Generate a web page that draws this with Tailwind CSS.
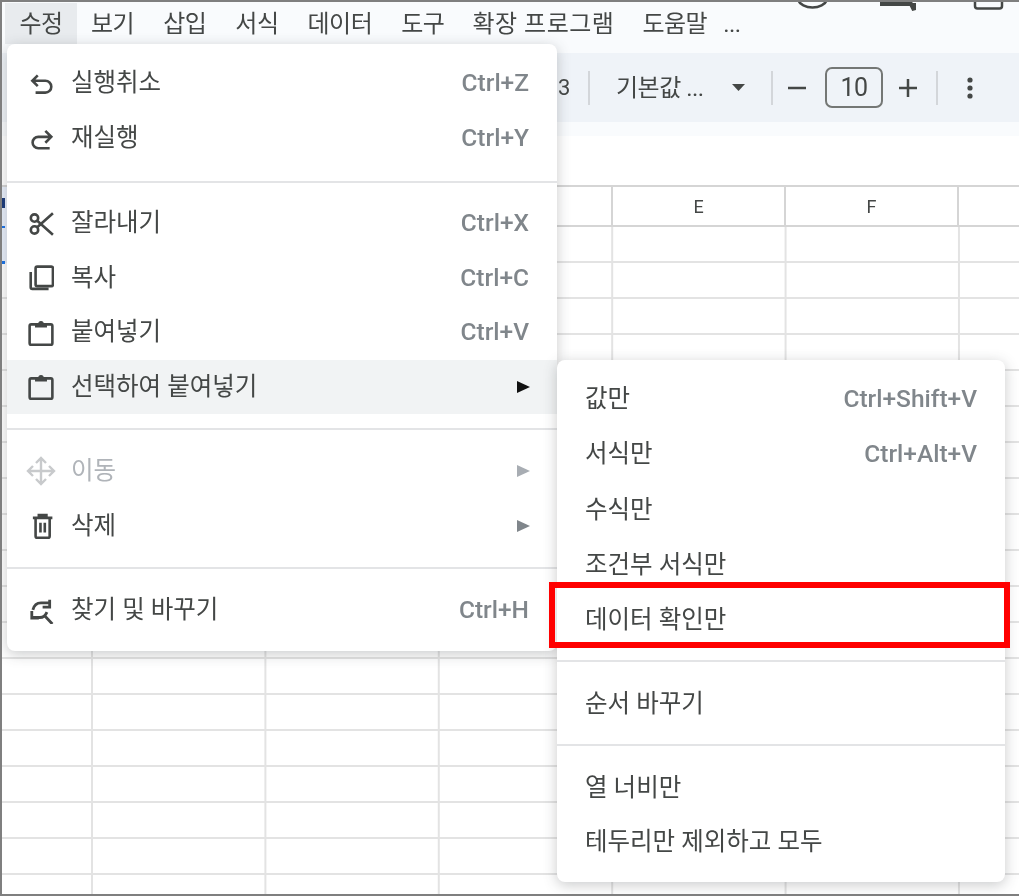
<!DOCTYPE html>
<html lang="ko">

<head>
    <meta charset="UTF-8">
    <title>Edit menu</title>
    <script src="https://cdn.jsdelivr.net/npm/@tailwindcss/browser@4"></script>
</head>

<body class="bg-white">
    <div class="relative w-[1019px] h-[896px] overflow-hidden bg-white font-['Roboto','Noto_Sans_CJK_KR',sans-serif] text-[#444746] blur-[0.45px]">

        <!-- menu bar -->
        <div class="h-[44px] bg-[#f9fbfd] flex items-center pl-[5px] pt-[3px] text-[24px] tracking-[-0.5px]">
            <div class="bg-[#e8ebee] h-[41px] w-[72px] flex items-center justify-center">수정</div>
            <span class="ml-[14px]">보기</span>
            <span class="ml-[29px]">삽입</span>
            <span class="ml-[29px]">서식</span>
            <span class="ml-[29px]">데이터</span>
            <span class="ml-[29px]">도구</span>
            <span class="ml-[28px] tracking-[0.5px]">확장 프로그램</span>
            <span class="ml-[28px]">도움말</span>
            <span class="ml-[16px]">...</span>
        </div>

        <!-- toolbar -->
        <div class="h-[92px] pt-[9px] bg-[#f9fbfd]">
            <div class="h-[69px] bg-[#eff3f8] flex items-center pl-[558px]">
                <span class="text-[22px] w-[12px]">3</span>
                <div class="ml-[18px] w-[2px] h-[34px] bg-[#d3d6da]"></div>
                <span class="ml-[26px] text-[24px] w-[116px] whitespace-nowrap tracking-[-0.5px]">기본값 ...</span>
                <svg class="w-[13px] h-[7px]" viewBox="0 0 13 7"><path d="M0 0h13L6.500 7z" fill="#444746"/></svg>
                <div class="ml-[26px] w-[2px] h-[34px] bg-[#d3d6da]"></div>
                <svg class="ml-[15px] w-[18px] h-[18px]" viewBox="0 0 18 18"><path d="M0 9h18" stroke="#444746" stroke-width="2.500"/></svg>
                <div class="ml-[19px] w-[58px] h-[41px] border-2 border-[#747775] rounded-[7px] flex items-center justify-center text-[25px] tracking-[-0.5px]">10</div>
                <svg class="ml-[16px] w-[18px] h-[18px]" viewBox="0 0 18 18"><path d="M0 9h18M9 0v18" stroke="#444746" stroke-width="2.500"/></svg>
                <div class="ml-[19px] w-[2px] h-[34px] bg-[#d3d6da]"></div>
                <svg class="ml-[29px] w-[6px] h-[22px]" viewBox="0 0 6 22"><circle cx="3" cy="3" r="2.600" fill="#444746"/><circle cx="3" cy="11" r="2.600" fill="#444746"/><circle cx="3" cy="19" r="2.600" fill="#444746"/></svg>
            </div>
        </div>

        <!-- formula bar -->
        <div class="h-[49px] bg-white"></div>

        <!-- sheet: header row + cells -->
        <div class="grid grid-cols-[93px_173px_173px_174px_173px_173px_60px] border-t-2 border-[#d5d5d5]">
            <div class="h-[40px] border-r-2 border-b-2 border-[#d5d5d5]"></div>
            <div class="h-[40px] border-r-2 border-b-2 border-[#d5d5d5]"></div>
            <div class="h-[40px] border-r-2 border-b-2 border-[#d5d5d5]"></div>
            <div class="h-[40px] border-r-2 border-b-2 border-[#d5d5d5]"></div>
            <div class="h-[40px] border-r-2 border-b-2 border-[#d5d5d5] flex items-center justify-center text-[18px]">E</div>
            <div class="h-[40px] border-r-2 border-b-2 border-[#d5d5d5] flex items-center justify-center text-[18px]">F</div>
            <div class="h-[40px] border-b-2 border-[#d5d5d5]"></div>
        </div>
        <!-- cell gridlines are a repeating background, there are too many rows to write out -->
        <div class="h-[700px] bg-[linear-gradient(to_right,#e3e3e3_2px,transparent_2px),linear-gradient(to_bottom,#e3e3e3_2px,transparent_2px)] bg-[size:173.4px_36px] bg-[position:91px_34px]"></div>

        <!-- toolbar icons cut off by the top of the crop -->
        <svg class="absolute left-[790px] top-0 w-[225px] h-[14px]" viewBox="0 0 225 14" fill="none" stroke="#444746" stroke-width="2.500">
            <path d="M8 0a15 10 0 0 0 29 0"/>
            <path d="M90 4h31l3 6V3" stroke-width="4"/>
            <path d="M185 0v6a2.500 2.500 0 0 0 2.500 2.500h22A2.500 2.500 0 0 0 212 6V0"/>
        </svg>

        <!-- selected cell column peeking out left of the menu -->
        <div class="absolute left-[2px] top-[187px] w-[5px] h-[76px] bg-[#e8effb]"></div>
        <div class="absolute left-[2px] top-[198px] w-[3px] h-[10px] bg-[#1a3a7a]"></div>
        <div class="absolute left-[2px] top-[226px] w-[3px] h-[2px] bg-[#1a73e8]"></div>
        <div class="absolute left-[2px] top-[261px] w-[3px] h-[3px] bg-[#1a73e8]"></div>

        <!-- edit menu -->
        <div class="absolute left-[7px] top-[44px] w-[550px] h-[607px] bg-white rounded-[8px] shadow-[0_3px_14px_rgba(60,64,67,0.28)] pt-[12px] text-[24.500px]">
            <div class="h-[55px] flex items-center">
                <svg class="ml-[21px] w-[26px] h-[26px] shrink-0" viewBox="0 0 24 24" fill="none" stroke="#444746" stroke-width="2.400"><path d="M9 4 4 9l5 5M4 9h12a5.500 5.500 0 0 1 0 11H7"/></svg>
                <span class="ml-[17px]">실행취소</span>
                <span class="ml-auto mr-[28px] font-medium text-[#80868b]">Ctrl+Z</span>
            </div>
            <div class="h-[55px] flex items-center">
                <svg class="ml-[21px] w-[26px] h-[26px] shrink-0" viewBox="0 0 24 24" fill="none" stroke="#444746" stroke-width="2.400"><path d="M16 4.500 21.500 10 16 15.500M21.500 10H9.500a5.250 5.250 0 0 0 0 10.500H20"/></svg>
                <span class="ml-[17px]">재실행</span>
                <span class="ml-auto mr-[28px] font-medium text-[#80868b]">Ctrl+Y</span>
            </div>
            <div class="mt-[15px] mb-[13px] h-[2px] bg-[#e3e4e6]"></div>
            <div class="h-[55px] flex items-center">
                <svg class="ml-[21px] w-[26px] h-[26px] shrink-0" viewBox="0 0 24 24" fill="none" stroke="#444746" stroke-width="2.400"><circle cx="6" cy="6.500" r="3.400"/><circle cx="6" cy="17.500" r="3.400"/><path d="M8.500 9 23 22M8.500 15 23 2"/></svg>
                <span class="ml-[17px]">잘라내기</span>
                <span class="ml-auto mr-[28px] font-medium text-[#80868b]">Ctrl+X</span>
            </div>
            <div class="h-[54px] flex items-center">
                <svg class="ml-[21px] w-[26px] h-[26px] shrink-0" viewBox="0 0 24 24" fill="none" stroke="#444746" stroke-width="2.400"><rect x="7" y="1.500" width="16" height="18" rx="1.500"/><path d="M2.500 6.500v14A1.500 1.500 0 0 0 4 22h15"/></svg>
                <span class="ml-[17px]">복사</span>
                <span class="ml-auto mr-[28px] font-medium text-[#80868b]">Ctrl+C</span>
            </div>
            <div class="h-[55px] flex items-center">
                <svg class="ml-[21px] w-[26px] h-[26px] shrink-0" viewBox="0 0 24 24" fill="none" stroke="#444746" stroke-width="2.400"><rect x="1.500" y="4" width="21" height="19" rx="1.500"/><path d="M7 6.500V3.500h3a2 2 0 0 1 4 0h3v3z" fill="#444746" stroke-width="1"/></svg>
                <span class="ml-[17px]">붙여넣기</span>
                <span class="ml-auto mr-[28px] font-medium text-[#80868b]">Ctrl+V</span>
            </div>
            <div class="h-[54px] flex items-center bg-[#f1f3f4]">
                <svg class="ml-[21px] w-[26px] h-[26px] shrink-0" viewBox="0 0 24 24" fill="none" stroke="#444746" stroke-width="2.400"><rect x="1.500" y="4" width="21" height="19" rx="1.500"/><path d="M7 6.500V3.500h3a2 2 0 0 1 4 0h3v3z" fill="#444746" stroke-width="1"/></svg>
                <span class="ml-[17px]">선택하여 붙여넣기</span>
                <svg class="ml-auto mr-[27px] w-[13px] h-[12px]" viewBox="0 0 13 12"><path d="M0 0l13 6-13 6z" fill="#111"/></svg>
            </div>
            <div class="mt-[14px] mb-[13px] h-[2px] bg-[#e3e4e6]"></div>
            <div class="h-[56px] flex items-center text-[#b0b4b9]">
                <svg class="ml-[19px] w-[30px] h-[30px] shrink-0" viewBox="0 0 30 30" fill="none" stroke="#c8cacc" stroke-width="2.400"><path d="M15 2v26M2 15h26M10 7l5-5 5 5M10 23l5 5 5-5M7 10l-5 5 5 5M23 10l5 5-5 5"/></svg>
                <span class="ml-[15px]">이동</span>
                <svg class="ml-auto mr-[27px] w-[13px] h-[12px]" viewBox="0 0 13 12"><path d="M0 0l13 6-13 6z" fill="#a8adb3"/></svg>
            </div>
            <div class="h-[54px] flex items-center">
                <svg class="ml-[21px] w-[26px] h-[26px] shrink-0" viewBox="0 0 24 24" fill="none" stroke="#444746" stroke-width="2.400"><path d="M4.500 4.500h18M10 4.500V2h7v2.500M7 4.500v17A1.500 1.500 0 0 0 8.500 23h10a1.500 1.500 0 0 0 1.500-1.500v-17M11.500 9v9M15.500 9v9"/></svg>
                <span class="ml-[17px]">삭제</span>
                <svg class="ml-auto mr-[27px] w-[13px] h-[12px]" viewBox="0 0 13 12"><path d="M0 0l13 6-13 6z" fill="#80868b"/></svg>
            </div>
            <div class="mt-[14px] mb-[14px] h-[2px] bg-[#e3e4e6]"></div>
            <div class="h-[55px] flex items-center">
                <svg class="ml-[21px] w-[26px] h-[26px] shrink-0" viewBox="0 0 24 24" fill="none" stroke="#444746" stroke-width="2.600"><path d="M4.500 11c1-4 3.500-6.500 7.500-6.500h8M20 1.500v7h-6.500M3.500 12v6.500H10M4 18h7c3 0 5-1.500 6.500-5M14.500 15.500l8 8.500"/></svg>
                <span class="ml-[17px]">찾기 및 바꾸기</span>
                <span class="ml-auto mr-[28px] font-medium text-[#80868b]">Ctrl+H</span>
            </div>
        </div>

        <!-- paste special submenu -->
        <div class="absolute left-[557px] top-[360px] w-[448px] h-[522px] bg-white rounded-[8px] shadow-[0_3px_14px_rgba(60,64,67,0.28)] pt-[12px] text-[24.500px]">
            <div class="h-[55px] flex items-center pl-[28px] pr-[28px]"><span>값만</span><span class="ml-auto font-medium text-[#80868b]">Ctrl+Shift+V</span></div>
            <div class="h-[55px] flex items-center pl-[28px] pr-[28px]"><span>서식만</span><span class="ml-auto font-medium text-[#80868b]">Ctrl+Alt+V</span></div>
            <div class="h-[56px] flex items-center pl-[28px]">수식만</div>
            <div class="h-[55px] flex items-center pl-[28px]">조건부 서식만</div>
            <div class="h-[55px] flex items-center pl-[28px]">데이터 확인만</div>
            <div class="mt-[12px] mb-[15px] h-[2px] bg-[#e3e4e6]"></div>
            <div class="h-[54px] flex items-center pl-[28px]">순서 바꾸기</div>
            <div class="mt-[13px] mb-[15px] h-[2px] bg-[#e3e4e6]"></div>
            <div class="h-[54px] flex items-center pl-[28px]">열 너비만</div>
            <div class="h-[54px] flex items-center pl-[28px]">테두리만 제외하고 모두</div>
        </div>

        <!-- red callout + screenshot frame -->
        <div class="absolute left-[549px] top-[582px] w-[461px] h-[66px] border-[6px] border-[#ff0000]"></div>
        <div class="absolute inset-0 border-2 border-r-0 border-[#7f7f7f]"></div>
    </div>
</body>

</html>
